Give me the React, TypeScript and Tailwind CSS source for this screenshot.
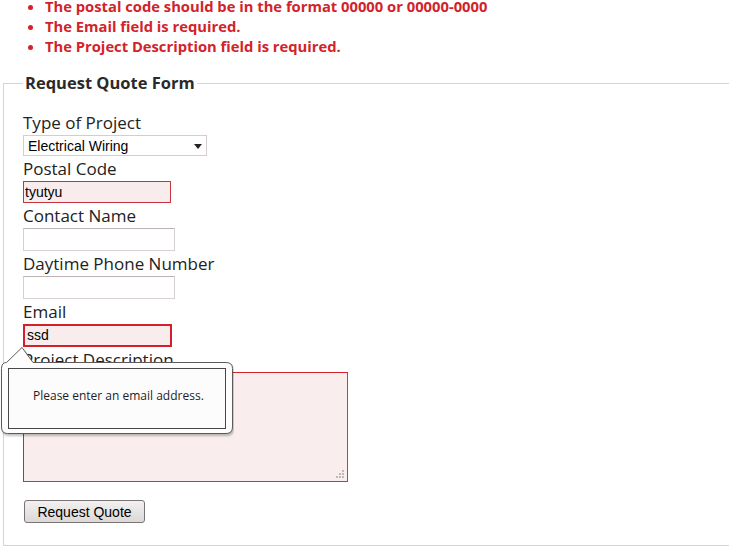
import React from "react";

const labelCls = "block h-[25px] pt-[1px] leading-[24px] text-[17px] text-[#222] font-['Open_Sans',sans-serif]";
const inputFont = "font-['Liberation_Sans',Arial,sans-serif] text-[14px] text-black";

export default function App() {
  return (
    <div className="w-[729px] h-[546px] overflow-hidden bg-white relative">
      <ul className="list-disc pl-[45px] mt-[-4px] text-[#d2232a] font-bold text-[14.75px] leading-5 font-['Open_Sans',sans-serif] marker:text-[#d2232a]">
        <li>The postal code should be in the format 00000 or 00000-0000</li>
        <li>The Email field is required.</li>
        <li>The Project Description field is required.</li>
      </ul>
      <fieldset className="ml-[3px] mt-[16px] w-[760px] border border-[#d9d4d4] pl-[19px] pt-[16px] pb-[22px]">
        <legend className="px-[2px] text-[16.5px] font-bold text-[#2a2a2a] font-['Open_Sans',sans-serif] leading-[22px]">
          Request Quote Form
        </legend>
        <div className="flex flex-col items-start">
          <label className={labelCls}>Type of Project</label>
          <div className="relative w-[184px] h-[21px] border border-[#d6cccc] bg-white">
            <span className={`${inputFont} absolute left-[4px] top-[1px] leading-[18px]`}>Electrical Wiring</span>
            <svg className="absolute right-[4px] top-[8px]" width="8" height="5" viewBox="0 0 8 5">
              <path d="M0 0 L8 0 L4 5 Z" fill="#222" />
            </svg>
          </div>
          <label className={labelCls}>Postal Code</label>
          <div className={`w-[148px] h-[22px] border border-[#c8343c] bg-[#f8ecec] px-[1px] ${inputFont} leading-[20px]`}>tyutyu</div>
          <label className={labelCls}>Contact Name</label>
          <div className="w-[152px] h-[23px] border border-[#d8d0d0] border-t-[#bcb4b4] bg-white" />
          <label className={labelCls}>Daytime Phone Number</label>
          <div className="w-[152px] h-[23px] border border-[#d8d0d0] border-t-[#bcb4b4] bg-white" />
          <label className={labelCls}>Email</label>
          <div className={`w-[149px] h-[23px] border-2 border-[#d4202a] bg-[#f8ecec] px-[2px] ${inputFont} leading-[19px]`}>ssd</div>
          <label className={labelCls}>Project Description</label>
          <div className="relative w-[325px] h-[110px] border border-[#d3242c] border-r-[#6e6464] border-b-[#9a4a4e] bg-[#f9eded]">
            <svg className="absolute right-[2px] bottom-[2px]" width="9" height="9" viewBox="0 0 9 9">
              <rect x="6" y="0" width="2" height="2" fill="#bbb" />
              <rect x="3" y="3" width="2" height="2" fill="#bbb" />
              <rect x="6" y="3" width="2" height="2" fill="#bbb" />
              <rect x="0" y="6" width="2" height="2" fill="#bbb" />
              <rect x="3" y="6" width="2" height="2" fill="#bbb" />
              <rect x="6" y="6" width="2" height="2" fill="#bbb" />
            </svg>
          </div>
          <button className={`mt-[18px] ml-[1px] w-[121px] h-[23px] border border-[#7a7474] rounded-[3px] bg-gradient-to-b from-[#f2f0f0] to-[#dcd8d8] ${inputFont} text-[#111] leading-[20px]`}>
            Request Quote
          </button>
        </div>
      </fieldset>

      {/* validation tooltip */}
      <div className="absolute left-0 top-[346px] w-[234px] h-[92px]">
        <svg className="absolute inset-0" width="234" height="92" viewBox="0 0 234 92">
          <path
            d="M6.5 16.5 L22 1.5 L33 16.5 L226 16.5 Q232.5 16.5 232.5 22.5 L232.5 81 Q232.5 87.5 226 87.5 L7.5 87.5 Q1.5 87.5 1.5 81 L1.5 22.5 Q1.5 16.5 6.5 16.5 Z"
            fill="#fdfdfd"
            stroke="#5e5a5a"
            strokeWidth="1"
            style={{ filter: "drop-shadow(1px 2px 1px rgba(0,0,0,0.25))" }}
          />
          <rect x="8.5" y="22.5" width="217" height="60" fill="#fdfcfc" stroke="#4a4646" strokeWidth="1" />
        </svg>
        <span className="absolute left-[33px] top-[42px] leading-[16px] text-[12px] text-[#1e1e1e] font-['Open_Sans',sans-serif]">
          Please enter an email address.
        </span>
      </div>
    </div>
  );
}
